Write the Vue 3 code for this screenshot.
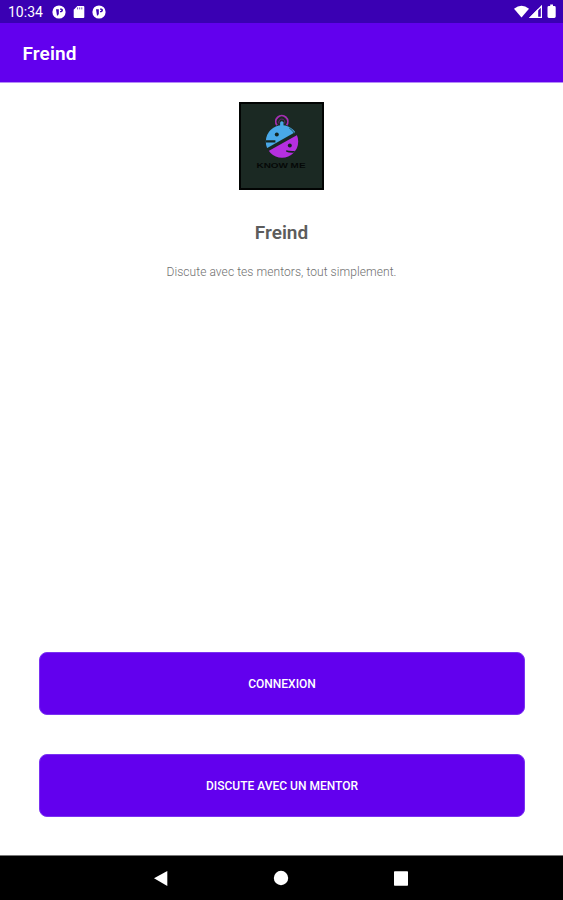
<script setup>
const notifications = ['app', 'card', 'app']
const actions = ['Connexion', 'Discute avec un mentor']
</script>

<template>
  <div class="screen">
    <div class="status">
      <span class="clock">10:34</span>
      <div class="notes">
        <template v-for="(kind, i) in notifications" :key="i">
          <svg v-if="kind === 'app'" class="note" viewBox="0 0 14 14">
            <circle cx="7" cy="7" r="6.6" fill="#fff" />
            <path d="M4 4.2H6.8V8.6Q6.8 10.4 5 10.8Z" fill="#3a00b3" />
            <path d="M8 3.4H9.4Q11 3.6 11 5.3T9.4 7.3H8V6H9.2V4.8H8Z" fill="#3a00b3" />
          </svg>
          <svg v-else class="note" viewBox="0 0 14 14">
            <path d="M5.4 1H11.3Q12.3 1 12.3 2V12Q12.3 13 11.3 13H2.7Q1.7 13 1.7 12V4.7Z" fill="#fff" />
            <path d="M5.6 2.4v2M7.7 2.4v2M9.8 2.4v2" stroke="#3a00b3" stroke-width=".7" />
          </svg>
        </template>
      </div>
      <svg class="system" viewBox="0 0 44 16">
        <path d="M0 4.7Q7.5-1 15 4.7L7.5 13.6Z" fill="#fff" />
        <path d="M24.2 4.8V14H15Z" fill="#fff" />
        <path d="M27.4 2.3V13.4H16.4Z" fill="none" stroke="#fff" stroke-width="1.2" />
        <path d="M34.8 2H36.2V.6H39V2H40.3Q41.7 2 41.7 3.4V12.6Q41.7 14 40.3 14H34.9Q33.5 14 33.5 12.6V3.4Q33.5 2 34.8 2Z" fill="#fff" />
      </svg>
    </div>
    <header class="bar"><span>Freind</span></header>
    <main class="content">
      <svg class="logo" viewBox="0 0 85 88">
        <defs>
          <clipPath id="face"><circle cx="43" cy="39.5" r="16.2" /></clipPath>
        </defs>
        <rect x="1" y="1" width="83" height="86" fill="#1b2923" stroke="#020403" stroke-width="2" />
        <path d="M38 23.3A6 6 0 1 1 47.6 23.3" fill="none" stroke="#a52fb3" stroke-width="1.8" />
        <path d="M40 21.5A3.1 3.1 0 1 1 45.6 21.5" fill="none" stroke="#642777" stroke-width="1" />
        <path d="M41.1 26V20.5Q42.8 18 44.5 20.5V26Z" fill="#49a9e8" />
        <g clip-path="url(#face)">
          <path d="M20 18H62V27L20 50.5Z" fill="#49a9e8" />
          <path d="M62 30.8L20 54.3V60H62Z" fill="#b52fe0" />
          <path d="M50.2 26Q53.8 28.3 55.4 31.5" fill="none" stroke="#1e4a52" stroke-width=".9" />
          <path d="M26 38.3H36.4V40.4H26Z" fill="#14251f" />
          <path d="M47.2 48.2Q51 49.3 57.3 48.7V50.5Q51 51.3 47.2 49.8Z" fill="#14251f" />
        </g>
        <circle cx="37.8" cy="32.4" r="2" fill="#14251f" />
        <circle cx="50.8" cy="43.4" r="2" fill="#14251f" />
        <text x="17.5" y="66" textLength="49" lengthAdjust="spacingAndGlyphs" class="brand">KNOW ME</text>
      </svg>
      <h1>Freind</h1>
      <p>Discute avec tes mentors, tout simplement.</p>
      <div class="actions">
        <button v-for="label in actions" :key="label" type="button">{{ label }}</button>
      </div>
    </main>
    <nav class="navigation">
      <svg viewBox="0 0 16 16"><path d="M1 8.2 14.3 1V16Z" fill="#fff" /></svg>
      <svg viewBox="0 0 16 16"><circle cx="8" cy="8" r="7.2" fill="#fff" /></svg>
      <svg viewBox="0 0 16 16"><rect x="1" y="1.3" width="14" height="14.4" rx=".7" fill="#fff" /></svg>
    </nav>
  </div>
</template>

<style>
body { margin: 0; background: #fff; }
</style>

<style scoped>
.screen {
  width: 563px;
  height: 900px;
  display: flex;
  flex-direction: column;
  overflow: hidden;
  background: #fff;
  font-family: Roboto, "Liberation Sans", sans-serif;
}
.status {
  height: 23px;
  flex: none;
  display: flex;
  align-items: center;
  padding: 0 5px 0 8px;
  box-sizing: border-box;
  background: #3a00b3;
  color: #fff;
}
.clock { width: 44px; font-size: 14px; line-height: 23px; padding-top: 1px; }
.notes { display: flex; gap: 6px; flex: 1; padding-top: 1px; }
.note { width: 14px; height: 14px; display: block; }
.system { width: 44px; height: 16px; display: block; }
.bar {
  height: 60px;
  flex: none;
  display: flex;
  align-items: center;
  padding: 2px 22.5px 0;
  box-sizing: border-box;
  background: #6200ee;
  border-bottom: 1px solid #b58cf7;
  color: #fff;
  font-size: 19px;
  font-weight: 600;
  letter-spacing: 0.1px;
}
.content {
  flex: 1;
  display: flex;
  flex-direction: column;
  align-items: center;
  padding: 19px 38px 38px;
}
.logo { width: 85px; height: 88px; display: block; }
h1 {
  margin: 31px 0 0;
  font-size: 19px;
  line-height: 24px;
  font-weight: 600;
  color: #5c5c5c;
}
.brand { font: 700 8px "Liberation Sans", sans-serif; fill: #050807; }
p {
  margin: 19px 0 0;
  font-size: 12px;
  line-height: 16px;
  font-weight: 300;
  letter-spacing: 0.07px;
  color: #707070;
  white-space: nowrap;
}
.actions {
  width: 100%;
  margin-top: auto;
  padding-left: 1px;
  box-sizing: border-box;
  display: flex;
  flex-direction: column;
  gap: 39px;
}
button {
  height: 63px;
  width: 100%;
  padding: 1px 0 0;
  border: 1px solid #7a33f1;
  border-radius: 8px;
  background: #6200ee;
  color: #fff;
  font: 500 12px Roboto, "Liberation Sans", sans-serif;
  text-transform: uppercase;
}
.navigation {
  height: 45px;
  flex: none;
  box-sizing: border-box;
  border-top: 1px solid #777;
  background: #000;
  display: flex;
  justify-content: center;
  align-items: center;
  gap: 104px;
  padding-right: 1px;
}
.navigation svg { width: 16px; height: 16px; display: block; }
</style>
